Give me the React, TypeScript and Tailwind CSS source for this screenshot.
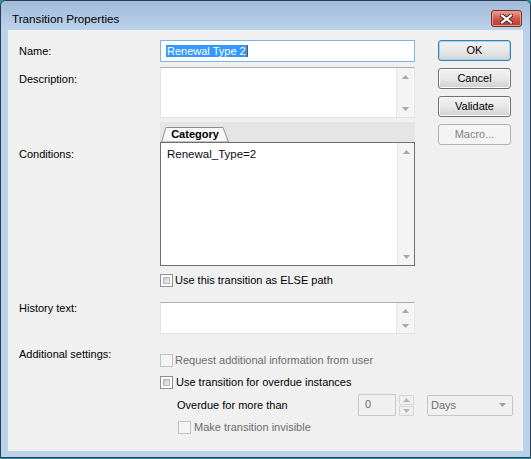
import React from 'react';

const font = "font-['Liberation_Sans',Arial,sans-serif]";

// small scroll arrow triangle
function Arrow({ up, color = '#a8a8a8' }: { up?: boolean; color?: string }) {
  return (
    <svg width="7" height="4" viewBox="0 0 7 4">
      <path d={up ? 'M3.5 0 L7 4 L0 4 Z' : 'M0 0 L7 0 L3.5 4 Z'} fill={color} />
    </svg>
  );
}

function ScrollBar() {
  return (
    <div className="w-[17px] h-full shrink-0 flex flex-col justify-between bg-[#f4f4f4] border-l border-[#e9e9e9]">
      <div className="h-[17px] flex items-center justify-center">
        <Arrow up />
      </div>
      <div className="h-[17px] flex items-center justify-center">
        <Arrow />
      </div>
    </div>
  );
}

function Check({ disabled }: { disabled?: boolean }) {
  return (
    <span
      className={`block w-[13px] h-[13px] shrink-0 border p-[2px] ${
        disabled ? 'border-[#c2c2c2] bg-[#f4f4f4]' : 'border-[#8e8f8f] bg-white'
      }`}
    >
      <span
        className={`block w-full h-full ${
          disabled
            ? 'bg-[#f4f4f4]'
            : 'bg-linear-to-br from-[#c4c6c9] to-[#f3f3f3] border border-[#b4b7bb]'
        }`}
      />
    </span>
  );
}

function Btn({
  label,
  primary,
  disabled,
}: {
  label: string;
  primary?: boolean;
  disabled?: boolean;
}) {
  const look = disabled
    ? 'border-[#adb2b5] bg-[#f4f4f4] text-[#838383]'
    : primary
    ? 'border-[#3c7fb1] bg-linear-to-b from-[#f2f2f2] via-[#e8e8e8] to-[#d3d3d3] shadow-[inset_0_0_0_1px_#9fd5f3]'
    : 'border-[#707070] bg-linear-to-b from-[#f2f2f2] via-[#e8e8e8] to-[#d0d0d0] shadow-[inset_0_0_0_1px_#fbfbfb]';
  return (
    <div
      className={`w-[73px] h-[21px] rounded-[3px] border flex items-center justify-center ${look}`}
    >
      {label}
    </div>
  );
}

function CloseBtn() {
  return (
    <div className="mt-[9px] w-[31px] h-[17px] rounded-[3px] border border-[#7a2b24] bg-linear-to-b from-[#e6a496] via-[#cd5a4b] to-[#b9382a] shadow-[inset_0_0_0_1px_#e99a8c] flex items-center justify-center">
      <svg width="13" height="10" viewBox="0 0 13 10">
        <path d="M2 1.5 L11 8.5 M11 1.5 L2 8.5" stroke="#4a1e1a" strokeWidth="4" strokeLinecap="square" />
        <path d="M2 1.5 L11 8.5 M11 1.5 L2 8.5" stroke="#ffffff" strokeWidth="2.2" strokeLinecap="square" />
      </svg>
    </div>
  );
}

export default function App() {
  return (
    <div className={`w-[531px] h-[459px] bg-[#2f8e97] ${font} text-[11px] leading-[13px] text-black`}>
      <div className="w-[531px] h-[458px] flex flex-col bg-[#b9d1ea] border border-[#2d3c4e] rounded-t-[6px] overflow-hidden">
        {/* title bar */}
        <div className="h-[29px] shrink-0 flex items-start justify-between pl-[11px] pr-[8px] bg-linear-to-b from-[#a1bbd9] to-[#bcd3eb]">
          <span className="pt-[11px] text-[11.7px]">Transition Properties</span>
          <CloseBtn />
        </div>

        {/* client area */}
        <div className="mx-[7px] h-[421px] shrink-0 bg-[#f0f0f0] flex flex-col pl-[11px] pt-[10px]">
          <div className="flex">
            <div className="flex flex-col w-[396px]">
              <div className="flex items-center h-[22px]">
                <span className="w-[141px]">Name:</span>
                <div className="w-[255px] h-[22px] border border-[#7eb4ea] bg-white flex items-center pl-[5px]">
                  <span className="bg-[#3399ff] text-white leading-[12px] px-px">Renewal Type 2</span>
                  <span className="w-px h-[12px] bg-[#8a4a1a]" />
                </div>
              </div>

              <div className="flex mt-[5px]">
                <span className="w-[141px] pt-[6px]">Description:</span>
                <div className="w-[255px] h-[51px] border border-[#e2e3ea] border-t-[#abadb3] bg-white flex justify-end pr-px">
                  <ScrollBar />
                </div>
              </div>

              <div className="flex mt-[4px]">
                <span className="w-[141px] pt-[26px]">Conditions:</span>
                <div className="w-[255px] flex flex-col">
                  <div className="h-[20px] bg-[#e5e5e5] flex items-end pl-px">
                    <div className="relative w-[68px] h-[15px] flex items-center justify-center font-bold">
                      <svg className="absolute inset-0" width="68" height="15" viewBox="0 0 68 15">
                        <polygon points="0.5,15 5,0.5 62,0.5 67.5,15" fill="#f7f7f7" stroke="#8c8f96" />
                      </svg>
                      <span className="relative">Category</span>
                    </div>
                  </div>
                  <div className="h-[124px] border border-[#6f6f6f] bg-white flex">
                    <div className="flex-1 pl-[6px] pt-[5px] text-[11.5px] text-[#0a0a20]">Renewal_Type=2</div>
                    <ScrollBar />
                  </div>
                </div>
              </div>
            </div>

            <div className="ml-[23px] flex flex-col gap-[7px]">
              <Btn label="OK" primary />
              <Btn label="Cancel" />
              <Btn label="Validate" />
              <Btn label="Macro..." disabled />
            </div>
          </div>

          <div className="flex items-center mt-[8px]">
            <span className="w-[141px]" />
            <Check />
            <span className="ml-[2px]">Use this transition as ELSE path</span>
          </div>

          <div className="flex mt-[15px]">
            <span className="w-[141px]">History text:</span>
            <div className="w-[255px] h-[32px] border border-[#e2e3ea] border-t-[#abadb3] bg-white flex justify-end pr-px">
              <ScrollBar />
            </div>
          </div>

          <div className="flex mt-[14px]">
            <span className="w-[141px]">Additional settings:</span>
            <div className="pt-[6px] flex items-center text-[#6d6d6d]">
              <Check disabled />
              <span className="ml-[2px]">Request additional information from user</span>
            </div>
          </div>

          <div className="flex items-center mt-[9px]">
            <span className="w-[141px]" />
            <Check />
            <span className="ml-[3px]">Use transition for overdue instances</span>
          </div>

          <div className="flex items-center mt-[5px]">
            <span className="w-[141px]" />
            <span className="w-[198px] pl-[17px]">Overdue for more than</span>
            <div className="w-[38px] h-[22px] border border-[#c9c9c9] rounded-[1px] text-[#6d6d6d] pl-[6px] pt-[3px]">0</div>
            <div className="ml-[3px] w-[15px] h-[21px] flex flex-col gap-px">
              <div className="flex-1 border border-[#d4d4d4] rounded-[1px] flex items-center justify-center">
                <Arrow up color="#b4b4b4" />
              </div>
              <div className="flex-1 border border-[#d4d4d4] rounded-[1px] flex items-center justify-center">
                <Arrow color="#b4b4b4" />
              </div>
            </div>
            <div className="ml-[13px] w-[86px] h-[21px] border border-[#c4c4c4] rounded-[2px] flex items-center justify-between pl-[3px] pr-[6px] text-[#6d6d6d]">
              <span>Days</span>
              <Arrow color="#a0a0a0" />
            </div>
          </div>

          <div className="flex items-center mt-[5px]">
            <span className="w-[141px]" />
            <span className="w-[18px]" />
            <Check disabled />
            <span className="ml-[3px] text-[#6d6d6d]">Make transition invisible</span>
          </div>
        </div>
      </div>
    </div>
  );
}
